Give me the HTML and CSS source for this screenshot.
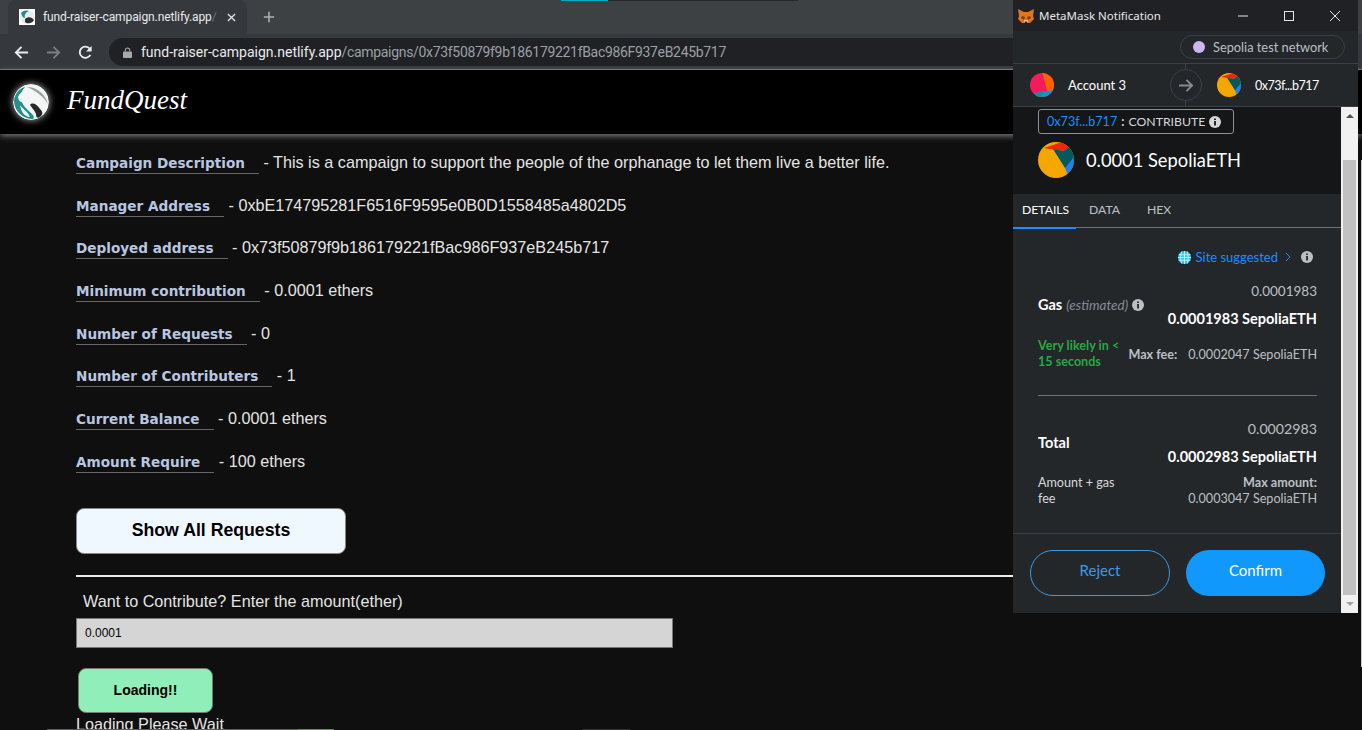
FILE: index.html
```html
<!DOCTYPE html>
<html lang="en">
<head>
  <meta charset="UTF-8" />
  <title>FundQuest</title>
  <link rel="stylesheet" href="styles.css">
</head>
<body>
  <div class="tab-strip">
    <div class="tab">
      <svg class="favicon" viewBox="0 0 16 16">
        <rect width="16" height="16" fill="#fff"/>
        <circle cx="8" cy="8" r="7" fill="#e8ecec"/>
        <path d="M2 4C4 1 8 1 10 2C7 3 5 6 6 9C4 9 3 7 2 4Z" fill="#1f8f88"/>
        <path d="M6 10C9 7 13 8 15 11C13 15 8 15 6 13Z" fill="#2b2f33"/>
      </svg>
      <span class="tab-title">fund-raiser-campaign.netlify.app<span class="tab-fade">/</span></span>
      <svg class="tab-close" viewBox="0 0 10 10"><path d="M1 1L9 9M9 1L1 9" stroke="#dfe1e3" stroke-width="1.5"/></svg>
    </div>
    <svg class="new-tab" viewBox="0 0 14 14"><path d="M7 1V13M1 7H13" stroke="#aeb1b5" stroke-width="1.8"/></svg>
  </div>

  <div class="toolbar">
    <svg class="nav-icon" viewBox="0 0 16 16"><path d="M15 8H2M8 2L2 8L8 14" fill="none" stroke="#eceded" stroke-width="2"/></svg>
    <svg class="nav-icon" viewBox="0 0 16 16"><path d="M1 8H14M8 2L14 8L8 14" fill="none" stroke="#7b7e82" stroke-width="2"/></svg>
    <svg class="nav-icon" viewBox="0 0 16 16"><path d="M13.2 10.5A6 6 0 1 1 12.6 4" fill="none" stroke="#eceded" stroke-width="2"/><path d="M14.5 1V7H8.5Z" fill="#eceded"/></svg>
    <div class="omnibox">
      <svg class="lock" viewBox="0 0 10 12"><path d="M2.5 5V3.5a2.5 2.5 0 0 1 5 0V5" fill="none" stroke="#a6a8ab" stroke-width="1.2"/><rect y="5" width="10" height="7" rx="1" fill="#a6a8ab"/></svg>
      <span class="url-host">fund-raiser-campaign.netlify.app</span><span class="url-path">/campaigns/0x73f50879f9b186179221fBac986F937eB245b717</span>
    </div>
  </div>

  <nav class="site-nav">
    <svg class="site-logo" viewBox="0 0 36 36">
      <circle cx="18" cy="18" r="18" fill="#f4f6f6"/>
      <path d="M1 16C2 9 7 4 12 3C9 7 7 10 8 14C8 20 13 24 18 29C20 31 22 33 20 35C11 35 1 28 1 16Z" fill="#1f9188"/>
      <path d="M5 13C7 8 11 7 13 9C10 10 8 13 9 18C7 18 5 16 5 13Z" fill="#f4f6f6"/>
      <path d="M7 21C11 26 15 28 17 33C12 33 8 28 7 21Z" fill="#f4f6f6"/>
      <path d="M17 21C19 18 24 20 27 25C30 28 30 30 27 33C24 35 23 33 23 30C22 27 19 24 17 21Z" fill="#23282b"/>
      <path d="M14 3C23 3 32 9 35 20C30 12 23 7 14 3Z" fill="#9aa1a4"/>
    </svg>
    <span class="site-brand">FundQuest</span>
  </nav>

  <main class="campaign">
    <p class="info-row"><span class="info-label">Campaign Description</span> - This is a campaign to support the people of the orphanage to let them live a better life.</p>
    <p class="info-row"><span class="info-label">Manager Address</span> - 0xbE174795281F6516F9595e0B0D1558485a4802D5</p>
    <p class="info-row"><span class="info-label">Deployed address</span> - 0x73f50879f9b186179221fBac986F937eB245b717</p>
    <p class="info-row"><span class="info-label">Minimum contribution</span> - 0.0001 ethers</p>
    <p class="info-row"><span class="info-label">Number of Requests</span> - 0</p>
    <p class="info-row"><span class="info-label">Number of Contributers</span> - 1</p>
    <p class="info-row"><span class="info-label">Current Balance</span> - 0.0001 ethers</p>
    <p class="info-row"><span class="info-label">Amount Require</span> - 100 ethers</p>

    <button class="requests-btn" type="button">Show All Requests</button>
    <hr class="divider" />

    <label class="contribute-label" for="amount">Want to Contribute? Enter the amount(ether)</label>
    <input class="contribute-input" id="amount" type="text" value="0.0001" />
    <button class="loading-btn" type="button">Loading!!</button>
    <div class="loading-text">Loading Please Wait</div>
  </main>

  <div class="window-edge window-edge-a"></div>
  <div class="window-edge window-edge-b"></div>
  <div class="window-edge window-edge-c"></div>
  <div class="top-edge top-edge-a"></div>
  <div class="top-edge top-edge-b"></div>
  <div class="page-scroll"></div>

  <aside class="mm-window">
    <div class="mm-titlebar">
      <svg class="mm-fox" viewBox="0 0 16 16">
        <path d="M0 1L6 4H10L16 1L15 8L16 11L12 15H4L0 11L1 8Z" fill="#e2761b"/>
        <path d="M4 8L7 9L6 12L3 10Z M12 8L9 9L10 12L13 10Z" fill="#763d16"/>
        <path d="M6 12H10L9 15H7Z" fill="#e4d3c3"/>
        <path d="M7 13.500H9V15H7Z" fill="#2b2118"/>
      </svg>
      <span class="mm-title">MetaMask Notification</span>
      <span class="win-btn"><svg viewBox="0 0 10 10"><path d="M0 5H10" stroke="#e6e6e6"/></svg></span>
      <span class="win-btn"><svg viewBox="0 0 10 10"><rect x=".5" y=".5" width="9" height="9" fill="none" stroke="#e6e6e6"/></svg></span>
      <span class="win-btn"><svg viewBox="0 0 10 10"><path d="M0 0L10 10M10 0L0 10" stroke="#e6e6e6"/></svg></span>
    </div>

    <div class="mm-network-bar">
      <div class="mm-network"><span class="mm-dot"></span>Sepolia test network</div>
    </div>

    <div class="mm-accounts">
      <svg class="mm-avatar" viewBox="0 0 24 24">
        <defs><clipPath id="av1"><circle cx="12" cy="12" r="12"/></clipPath></defs>
        <g clip-path="url(#av1)">
          <rect width="24" height="24" fill="#f5195f"/>
          <path d="M12 0H24V20L17 18L13 2Z" fill="#fa6400"/>
          <path d="M4 20L24 17V24H6Z" fill="#1a8fd8"/>
          <path d="M5 20L14 19L12 24H8Z" fill="#0f8f97"/>
        </g>
      </svg>
      <span class="mm-account-name">Account 3</span>
      <span class="mm-arrow">
        <svg viewBox="0 0 16 14"><path d="M0 7H14M8 1L14 7L8 13" fill="none" stroke="#848c96" stroke-width="2"/></svg>
      </span>
      <svg class="mm-avatar" viewBox="0 0 36 36">
        <defs><clipPath id="av2"><circle cx="18" cy="18" r="18"/></clipPath></defs>
        <g clip-path="url(#av2)">
          <rect width="36" height="36" fill="#f5a700"/>
          <path d="M6 6L24 0H36V8L26 9Z" fill="#f0250f"/>
          <path d="M15 7L26 9L34 3L40 22L27 26Z" fill="#03595f"/>
          <path d="M27 26L36 15V30L30 33Z" fill="#2380e8"/>
        </g>
      </svg>
      <span class="mm-account-addr">0x73f...b717</span>
    </div>

    <div class="mm-body">
      <div class="mm-content">
        <div class="mm-summary">
          <div class="mm-origin">
            <span class="mm-link">0x73f...b717</span><b class="mm-colon">:</b><span>CONTRIBUTE</span>
            <svg class="mm-info" viewBox="0 0 12 12"><circle cx="6" cy="6" r="6" fill="#d6d9dc"/><path d="M6 2.500V4M6 5V9.500" stroke="#141618" stroke-width="1.8"/></svg>
          </div>
          <div class="mm-amount">
            <svg class="mm-token" viewBox="0 0 36 36">
              <g clip-path="url(#av2)">
                <rect width="36" height="36" fill="#f5a700"/>
                <path d="M6 6L24 0H36V8L26 9Z" fill="#f0250f"/>
                <path d="M15 7L26 9L34 3L40 22L27 26Z" fill="#03595f"/>
                <path d="M27 26L36 15V30L30 33Z" fill="#2380e8"/>
              </g>
            </svg>
            <span>0.0001 SepoliaETH</span>
          </div>
        </div>

        <div class="mm-tabs">
          <span class="mm-tab mm-tab-active">DETAILS</span>
          <span class="mm-tab">DATA</span>
          <span class="mm-tab">HEX</span>
        </div>

        <div class="mm-details">
          <div class="mm-suggest">
            <svg class="mm-globe" viewBox="0 0 16 16"><circle cx="8" cy="8" r="7.500" fill="#35c3f5" stroke="#0b1a24"/><path d="M1 8H15M1.800 5H14.200M1.800 11H14.200M8 1V15M5 1.500C3.500 6 3.500 10 5 14.500M11 1.500C12.500 6 12.500 10 11 14.500" fill="none" stroke="#e6f6fd" stroke-width=".8"/></svg>
            <span class="mm-link">Site suggested</span>
            <svg class="mm-chevron" viewBox="0 0 6 10"><path d="M1 1L5 5L1 9" fill="none" stroke="#1c8cff"/></svg>
            <svg class="mm-info" viewBox="0 0 12 12"><circle cx="6" cy="6" r="6" fill="#bbc0c5"/><path d="M6 2.500V4M6 5V9.500" stroke="#24272a" stroke-width="1.800"/></svg>
          </div>

          <div class="mm-fee-row">
            <div class="mm-fee-name"><b>Gas</b> <i>(estimated)</i>
              <svg class="mm-info" viewBox="0 0 12 12"><circle cx="6" cy="6" r="6" fill="#bbc0c5"/><path d="M6 2.500V4M6 5V9.500" stroke="#24272a" stroke-width="1.800"/></svg>
            </div>
            <div class="mm-fee-values">
              <div class="mm-fee-small">0.0001983</div>
              <div class="mm-fee-big">0.0001983 SepoliaETH</div>
            </div>
          </div>

          <div class="mm-sub-row">
            <div class="mm-likely">Very likely in &lt;<br>15 seconds</div>
            <div class="mm-max"><b>Max fee:</b><span>0.0002047 SepoliaETH</span></div>
          </div>

          <hr class="mm-rule" />

          <div class="mm-fee-row mm-total-row">
            <div class="mm-fee-name"><b>Total</b></div>
            <div class="mm-fee-values">
              <div class="mm-fee-small">0.0002983</div>
              <div class="mm-fee-big">0.0002983 SepoliaETH</div>
            </div>
          </div>

          <div class="mm-sub-row mm-amount-row">
            <div class="mm-amount-note">Amount + gas<br>fee</div>
            <div class="mm-max-total"><b>Max amount:</b><br>0.0003047 SepoliaETH</div>
          </div>
        </div>

        <div class="mm-footer">
          <button class="mm-btn mm-reject" type="button">Reject</button>
          <button class="mm-btn mm-confirm" type="button">Confirm</button>
        </div>
      </div>

      <div class="mm-scrollbar">
        <span class="mm-scroll-up"></span>
        <span class="mm-scroll-thumb"></span>
        <span class="mm-scroll-down"></span>
      </div>
    </div>
  </aside>
</body>
</html>
```

FILE: styles.css
```css
html,
body {
  margin: 0;
  height: 730px;
  overflow: hidden;
}

body {
  position: relative;
  background: #0f0f0f;
  color: #e4e4e4;
  font-family: 'Liberation Sans', Arial, sans-serif;
  font-size: 16.2px;
}

/* browser chrome */
.tab-strip {
  height: 34px;
  background: #3d4144;
  display: flex;
  align-items: flex-end;
  padding-left: 8px;
}

.tab {
  width: 239px;
  height: 34px;
  box-sizing: border-box;
  background: #35383c;
  border-radius: 8px 8px 0 0;
  display: flex;
  align-items: center;
  padding: 0 11px;
  color: #e8eaed;
  font: 12px Roboto, sans-serif;
}

.favicon {
  width: 16px;
  height: 16px;
  margin-right: 8px;
  flex: none;
}

.tab-title {
  flex: 1;
  white-space: nowrap;
  letter-spacing: -0.1px;
}

.tab-fade {
  color: #6f7276;
}

.tab-close {
  width: 9px;
  height: 9px;
  margin-left: 9px;
  flex: none;
}

.new-tab {
  width: 12px;
  height: 12px;
  margin: 0 0 11px 16px;
}

.toolbar {
  height: 36px;
  box-sizing: border-box;
  background: #35383c;
  border-bottom: 1px solid #6a6c6f;
  display: flex;
  align-items: center;
  padding: 1px 0 0 14px;
}

.nav-icon {
  width: 15px;
  height: 15px;
  margin-right: 17px;
  flex: none;
}

.omnibox {
  width: 1000px;
  height: 28px;
  margin-left: -1px;
  background: #202124;
  border-radius: 14px;
  display: flex;
  align-items: center;
  padding-left: 14px;
  font: 14px Roboto, sans-serif;
  white-space: nowrap;
}

.lock {
  width: 9px;
  height: 11px;
  margin-right: 9px;
}

.url-host {
  color: #e8eaed;
}

.url-path {
  color: #9aa0a6;
  letter-spacing: -0.32px;
}

/* site */
.site-nav {
  height: 64px;
  background: #000;
  display: flex;
  align-items: center;
  padding-left: 13px;
  box-shadow: 0 2px 6px rgba(255, 255, 255, 0.45);
  position: relative;
}

.site-logo {
  width: 36px;
  height: 36px;
  border-radius: 50%;
  box-shadow: 0 0 7px rgba(255, 255, 255, 0.7);
  flex: none;
}

.site-brand {
  margin-left: 18px;
  margin-bottom: 3px;
  color: #fff;
  font: italic 27px 'Liberation Serif', serif;
}

.campaign {
  padding: 18px 0 0 76px;
}

.info-row {
  margin: 0;
  height: 42.7px;
  line-height: 20px;
  white-space: nowrap;
}

.info-label {
  display: inline-block;
  padding-right: 14px;
  border-bottom: 1px solid #666;
  color: #b9c6e0;
  font: bold 13.6px/20px 'DejaVu Sans', sans-serif;
}

.requests-btn {
  display: block;
  width: 270px;
  height: 46px;
  margin-top: 14px;
  background: #f0f8ff;
  border: 1px solid #888;
  border-radius: 8px;
  color: #000;
  font: bold 17.7px 'Liberation Sans', sans-serif;
}

.divider {
  width: 1240px;
  height: 2px;
  margin: 21px 0 0;
  border: 0;
  background: #ececec;
}

.contribute-label {
  display: block;
  margin: 15px 0 0 7px;
  line-height: 18px;
}

.contribute-input {
  display: block;
  width: 597px;
  height: 30px;
  box-sizing: border-box;
  margin-top: 8px;
  padding: 0 8px;
  background: #d5d5d5;
  border: 1px solid #777;
  color: #000;
  font: 12px 'Liberation Sans', sans-serif;
}

.loading-btn {
  display: block;
  width: 135px;
  height: 45px;
  margin: 20px 0 0 2px;
  background: #90eeb9;
  border: 1px solid #777;
  border-radius: 8px;
  color: #000;
  font: bold 14px 'Liberation Sans', sans-serif;
}

.loading-text {
  margin-top: 2px;
  line-height: 18px;
}

/* bits of other windows showing round the edges */
.window-edge {
  position: absolute;
  bottom: 0;
  height: 1px;
}

.window-edge-a {
  left: 47px;
  width: 251px;
  background: #5a5a5a;
}

.window-edge-b {
  left: 298px;
  width: 36px;
  background: #4f9a44;
}

.window-edge-c {
  left: 582px;
  width: 48px;
  background: #333;
}

.top-edge {
  position: absolute;
  top: 0;
  height: 1px;
}

.top-edge-a {
  left: 561px;
  width: 47px;
  background: #00aebd;
}

.top-edge-b {
  left: 608px;
  width: 190px;
  background: #26282a;
}

.page-scroll {
  position: absolute;
  right: 0;
  top: 160px;
  width: 1px;
  height: 507px;
  background: #c8c8c8;
}

/* metamask popup */
.mm-window {
  position: absolute;
  left: 1013px;
  top: 0;
  width: 345px;
  height: 613px;
  display: flex;
  flex-direction: column;
  background: #24272a;
  color: #fff;
  font: 12.6px Lato, sans-serif;
}

.mm-titlebar {
  height: 31px;
  flex: none;
  background: #1f2124;
  display: flex;
  align-items: center;
  padding-left: 5px;
}

.mm-fox {
  width: 16px;
  height: 16px;
  margin-right: 5px;
}

.mm-title {
  flex: 1;
  color: #e8e8e8;
  font: 11.5px 'Noto Sans', sans-serif;
}

.win-btn {
  width: 46px;
  display: flex;
  justify-content: center;
}

.win-btn svg {
  width: 10px;
  height: 10px;
}

.mm-network-bar {
  height: 33px;
  flex: none;
  box-sizing: border-box;
  border-bottom: 1px solid #3b4046;
  display: flex;
  justify-content: flex-end;
  padding: 4px 13px 0 0;
}

.mm-network {
  width: 165px;
  height: 24px;
  box-sizing: border-box;
  border: 1px solid #3b4046;
  border-radius: 12px;
  display: flex;
  align-items: center;
  padding-left: 12px;
  color: #bbc0c5;
  font-size: 12.8px;
}

.mm-dot {
  width: 12px;
  height: 12px;
  border-radius: 50%;
  background: #cfb5f0;
  margin-right: 8px;
}

.mm-accounts {
  height: 43px;
  flex: none;
  box-sizing: border-box;
  border-bottom: 1px solid #3b4046;
  display: flex;
  align-items: center;
  padding-left: 17px;
  position: relative;
}

.mm-accounts::before {
  content: "";
  position: absolute;
  left: 172px;
  top: 0;
  bottom: 0;
  width: 1px;
  background: #3b4046;
}

.mm-avatar {
  width: 24px;
  height: 24px;
  flex: none;
}

.mm-account-name {
  width: 102px;
  margin-left: 14px;
  font-size: 13px;
}

.mm-account-addr {
  margin-left: 14px;
  font-size: 12.5px;
  letter-spacing: -0.5px;
}

.mm-arrow {
  width: 32px;
  height: 32px;
  box-sizing: border-box;
  margin-right: 15px;
  border: 1px solid #3b4046;
  border-radius: 50%;
  background: #24272a;
  display: flex;
  align-items: center;
  justify-content: center;
  position: relative;
}

.mm-arrow svg {
  width: 15px;
  height: 13px;
}

.mm-body {
  flex: 1;
  display: flex;
  min-height: 0;
}

.mm-content {
  flex: 1;
  display: flex;
  flex-direction: column;
  min-width: 0;
}

.mm-summary {
  height: 87px;
  flex: none;
  box-sizing: border-box;
  background: #141618;
  padding: 2px 0 0 25px;
}

.mm-origin {
  width: 196px;
  height: 25px;
  box-sizing: border-box;
  border: 1px solid #8d9299;
  border-radius: 3px;
  display: flex;
  align-items: center;
  padding-left: 8px;
  color: #d6d9dc;
  font-size: 12.3px;
  white-space: nowrap;
}

.mm-origin .mm-link {
  font-size: 12.6px;
}

.mm-colon {
  margin: 0 4px;
}

.mm-link {
  color: #1c8cff;
}

.mm-info {
  width: 12px;
  height: 12px;
  flex: none;
}

.mm-origin .mm-info {
  margin-left: 4px;
}

.mm-amount {
  display: flex;
  align-items: center;
  margin-top: 8px;
  font-size: 18.3px;
}

.mm-token {
  width: 36px;
  height: 36px;
  margin-right: 12px;
}

.mm-tabs {
  height: 34px;
  flex: none;
  box-sizing: border-box;
  border-bottom: 1px solid #6a737d;
  display: flex;
  color: #bbc0c5;
  font-size: 12.2px;
}

.mm-tab {
  padding: 8px 14px 0 9px;
  margin-right: 4px;
  height: 25px;
}

.mm-tab-active {
  color: #fff;
  padding: 8px 8px 0 9px;
  width: 46px;
  margin-right: 4px;
  border-bottom: 2px solid #1c8cff;
}

.mm-details {
  flex: 1;
  padding: 0 24px 0 25px;
}

.mm-suggest {
  display: flex;
  align-items: center;
  justify-content: flex-end;
  height: 58px;
  padding-right: 4px;
  font-size: 13px;
}

.mm-suggest .mm-globe {
  width: 15px;
  height: 15px;
  margin-right: 4px;
}

.mm-chevron {
  width: 6px;
  height: 10px;
  margin: 0 10px 0 7px;
}

.mm-fee-row {
  height: 50px;
  margin-top: -6px;
  display: flex;
  align-items: center;
  justify-content: space-between;
}

.mm-fee-name {
  display: flex;
  align-items: center;
  gap: 4px;
  font-size: 14.5px;
  margin-top: -1px;
}

.mm-fee-name i {
  color: #848c96;
  font-size: 13.5px;
}

.mm-fee-values {
  text-align: right;
}

.mm-fee-small {
  color: #bbc0c5;
  font-size: 13.5px;
  line-height: 20px;
}

.mm-fee-big {
  margin-top: 8px;
  font-size: 14.5px;
  font-weight: 700;
  line-height: 20px;
}

.mm-sub-row {
  display: flex;
  align-items: center;
  justify-content: space-between;
  height: 32px;
  margin-top: 8px;
}

.mm-likely {
  color: #28a745;
  font-weight: 700;
  line-height: 16px;
}

.mm-max {
  display: flex;
  gap: 11px;
  color: #bbc0c5;
}

.mm-rule {
  height: 1px;
  margin: 25px 0 0;
  border: 0;
  background: #6a737d;
}

.mm-total-row {
  margin-top: 22px;
}

.mm-total-row .mm-fee-small {
  font-size: 14.2px;
}

.mm-amount-row {
  margin-top: 7px;
}

.mm-amount-note {
  color: #d6d9dc;
  line-height: 16.5px;
}

.mm-max-total {
  color: #bbc0c5;
  text-align: right;
  line-height: 16.5px;
}

.mm-footer {
  height: 80px;
  flex: none;
  box-sizing: border-box;
  border-top: 1px solid #3b4046;
  display: flex;
  justify-content: space-between;
  padding: 16px 16px 0 17px;
}

.mm-btn {
  width: 140px;
  height: 46px;
  padding-bottom: 8px;
  border-radius: 23px;
  font: 15px Lato, sans-serif;
}

.mm-reject {
  background: transparent;
  border: 1px solid #3d9ae0;
  color: #3d9ae8;
}

.mm-confirm {
  width: 139px;
  background: #1098fc;
  border: 0;
  color: #fff;
}

.mm-scrollbar {
  width: 17px;
  flex: none;
  background: #f1f1f1;
  display: flex;
  flex-direction: column;
  align-items: center;
  position: relative;
}

.mm-scroll-thumb {
  position: absolute;
  top: 53px;
  left: 2px;
  width: 13px;
  height: 435px;
  background: #c1c1c1;
}

.mm-scroll-up {
  margin-top: 7px;
  border: 4px solid transparent;
  border-top: 0;
  border-bottom: 4px solid #505050;
}

.mm-scroll-down {
  position: absolute;
  bottom: 7px;
  border: 4px solid transparent;
  border-bottom: 0;
  border-top: 4px solid #a3a3a3;
}
```
